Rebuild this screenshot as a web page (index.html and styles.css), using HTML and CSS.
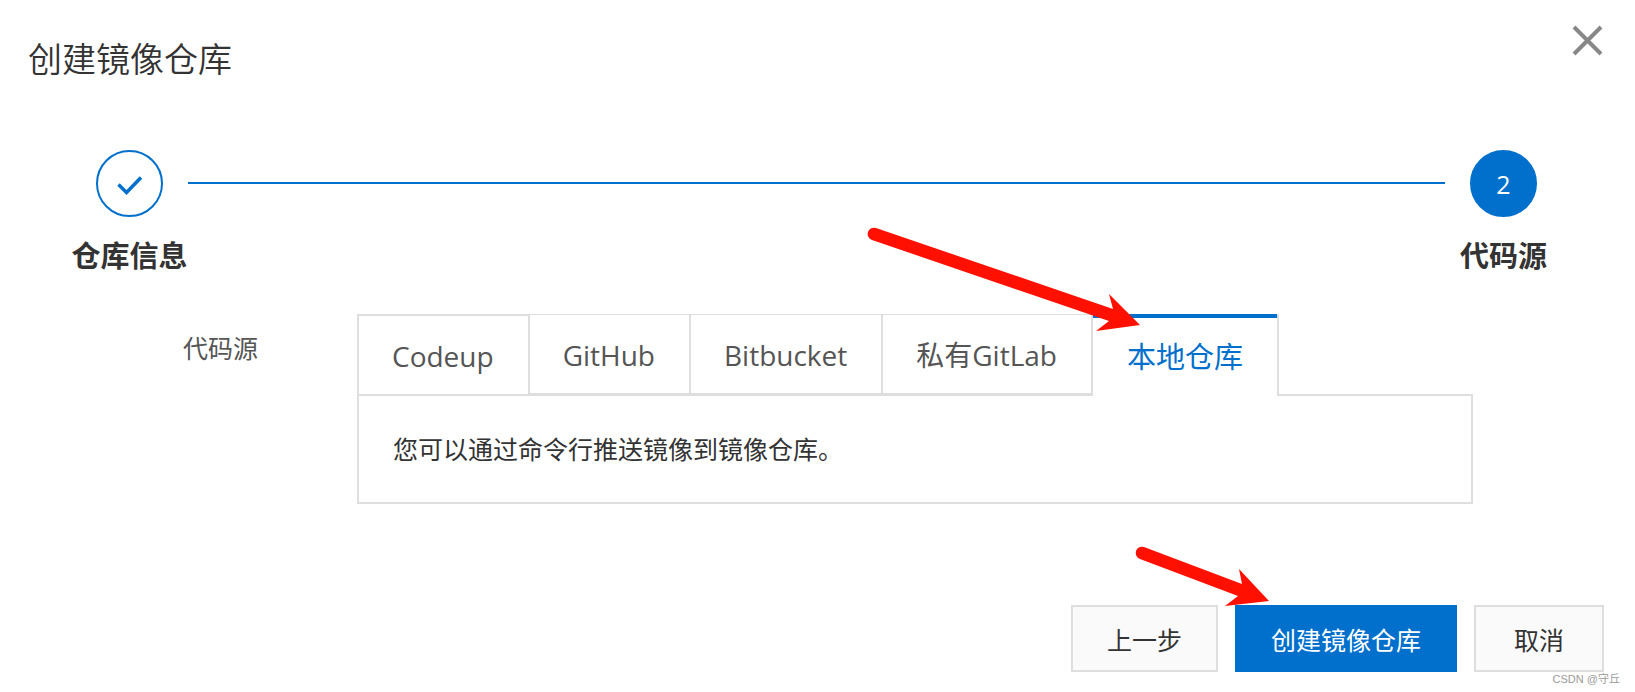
FILE: index.html
```html
<!doctype html>
<html lang="zh-CN">
<head>
  <meta charset="utf-8">
  <title>创建镜像仓库</title>
  <link rel="stylesheet" href="styles.css">
</head>

<body>
  <div class="dialog">
    <div class="header">
      <h1 class="title">创建镜像仓库</h1>
      <button class="close" aria-label="关闭">
        <svg width="32" height="32" viewBox="0 0 32 32"><path d="M2 2L29 29M29 2L2 29" stroke="#888" stroke-width="4" fill="none"/></svg>
      </button>
    </div>

    <div class="steps">
      <div class="step">
        <div class="circle">
          <svg width="26" height="22" viewBox="0 0 26 22"><path d="M1.500 11.500L9.500 19.500L24 4.500" stroke="#0070cc" stroke-width="3.500" fill="none"/></svg>
        </div>
        <div class="step-name">仓库信息</div>
      </div>
      <div class="line"></div>
      <div class="step">
        <div class="circle current">2</div>
        <div class="step-name">代码源</div>
      </div>
    </div>

    <div class="row">
      <div class="label" id="source">代码源</div>
      <div class="control">
        <div class="tabs" role="tablist" aria-labelledby="source">
          <button class="tab first" role="tab">Codeup</button>
          <button class="tab" role="tab">GitHub</button>
          <button class="tab" role="tab">Bitbucket</button>
          <button class="tab" role="tab">私有GitLab</button>
          <button class="tab active" role="tab" aria-selected="true">本地仓库
            <svg class="arrow arrow-tab" width="276" height="108" viewBox="0 0 276 108"><path d="M10 2L247 83L243 68L274 99L230 105L243 95L6 14A6 6 0 0 1 10 2Z" fill="#ff1000"/></svg>
          </button>
        </div>
        <div class="panel" role="tabpanel">您可以通过命令行推送镜像到镜像仓库。</div>
      </div>
    </div>

    <div class="footer">
      <button class="btn">上一步</button>
      <button class="btn primary">创建镜像仓库
        <svg class="arrow arrow-btn" width="138" height="64" viewBox="0 0 138 64"><path d="M10 2L108 39L105 24L135 56L91 61L104 51L6 14A6 6 0 0 1 10 2Z" fill="#ff1000"/></svg>
      </button>
      <button class="btn cancel">取消</button>
    </div>
    <div class="watermark">CSDN @守丘</div>
  </div>
</body>

</html>
```
FILE: styles.css
```css
* {
  box-sizing: border-box;
}
body {
  margin: 0;
  background: #fff;
  color: #333;
  font-family: "Open Sans", "Noto Sans CJK SC", sans-serif;
  font-size: 25px;
}
button {
  font-family: inherit;
  cursor: pointer;
}
.header {
  display: flex;
  justify-content: space-between;
  align-items: flex-start;
  height: 150px;
  padding: 25px 31px 0 28px;
}
.title {
  margin: 10px 0 0;
  font-size: 34px;
  line-height: 48px;
  font-weight: 350;
}
.close {
  padding: 0;
  border: none;
  background: none;
}
.close svg {
  display: block;
}

/* steps */
.steps {
  display: flex;
  padding: 0 73px 0 71px;
}
.step {
  display: flex;
  flex-direction: column;
  align-items: center;
  width: 117px;
}
.circle {
  display: flex;
  align-items: center;
  justify-content: center;
  width: 67px;
  height: 67px;
  border: 2px solid #0070cc;
  border-radius: 50%;
}
.current {
  background: #0070cc;
  color: #fff;
}
.step-name {
  margin-top: 19px;
  font-size: 29px;
  line-height: 40px;
  font-weight: bold;
  white-space: nowrap;
}
.line {
  flex: 1;
  height: 2px;
  margin-top: 32px;
  background: #0070cc;
}

/* form */
.row {
  display: flex;
  margin-top: 38px;
  padding-right: 162px;
}
.label {
  width: 357px;
  padding: 14px 99px 0 0;
  line-height: 40px;
  text-align: right;
  color: #555;
}
.control {
  flex: 1;
}
.tabs {
  display: flex;
  align-items: flex-start;
}
.tab {
  position: relative;
  height: 80px;
  padding: 3px 34px 0 33px;
  border: solid #dedede;
  border-width: 1px 2px 1px 0;
  background: #fff;
  color: #555;
  font-size: 28px;
  line-height: 75px;
  white-space: nowrap;
}
.first {
  border-width: 2px 2px 0 2px;
}
.active {
  height: 82px;
  margin-bottom: -2px;
  padding: 4px 34px 0;
  border-width: 0 2px 0 0;
  box-shadow: inset 0 4px #0070cc;
  color: #0070cc;
  font-size: 29px;
  line-height: 78px;
}
.panel {
  padding: 35px 34px 34px;
  border: 2px solid #dedede;
  line-height: 37px;
}

/* buttons */
.footer {
  display: flex;
  justify-content: flex-end;
  gap: 17px;
  margin-top: 101px;
  padding-right: 31px;
}
.btn {
  position: relative;
  height: 67px;
  padding: 0 34px;
  border: 2px solid #dedede;
  background: #fafafa;
  color: #333;
  font-size: 25px;
}
.primary {
  border-color: #0070cc;
  background: #0070cc;
  color: #fff;
}
.cancel {
  padding: 0 38px;
}

/* red arrows over the page */
.arrow {
  position: absolute;
  z-index: 2;
  pointer-events: none;
}
.arrow-tab {
  left: -227px;
  top: -88px;
}
.arrow-btn {
  left: -103px;
  top: -62px;
}
.watermark {
  padding-right: 15px;
  color: #999;
  font-family: "Liberation Sans", "Noto Sans CJK SC", sans-serif;
  font-size: 11px;
  line-height: 14px;
  text-align: right;
}
```
